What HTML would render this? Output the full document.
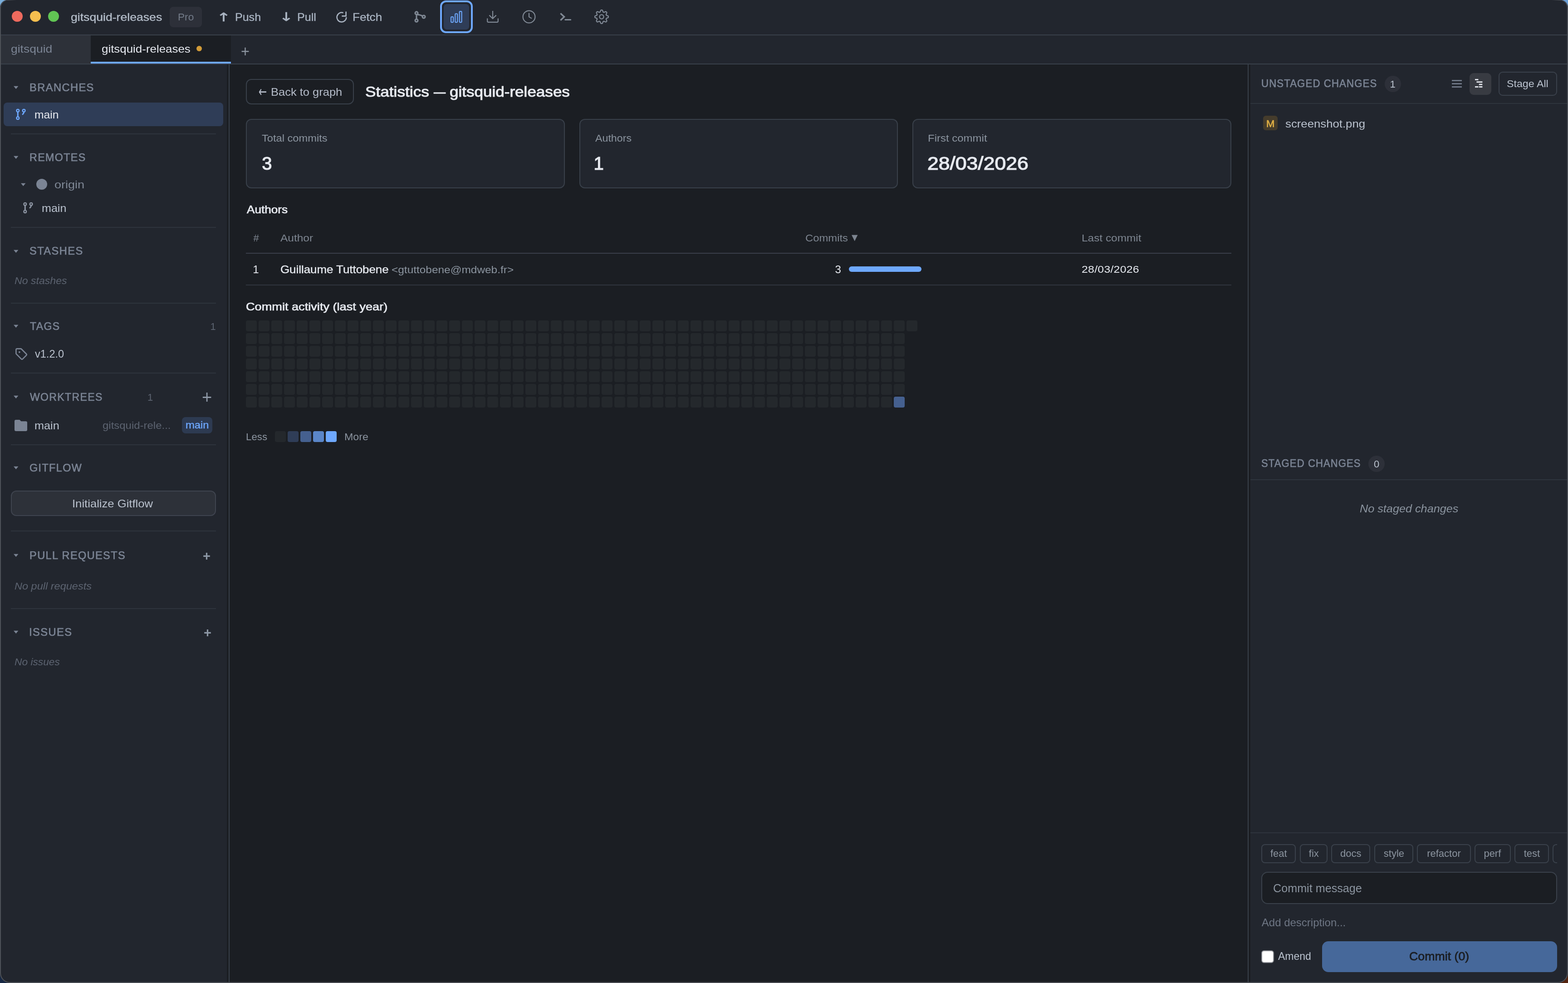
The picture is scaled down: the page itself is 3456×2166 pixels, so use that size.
<!DOCTYPE html>
<html lang="en">
<head>
<meta charset="utf-8">
<title>GitSquid — Statistics — gitsquid-releases</title>
<style>
* { box-sizing: border-box; margin: 0; padding: 0; }
html, body { width: 3456px; height: 2166px; background: #0b0d12; }
body { overflow: hidden; }
@media (min-resolution: 2dppx) and (max-width: 1800px) { html { zoom: 0.5; } }
body { position: relative; font-family: "Liberation Sans", sans-serif; -webkit-font-smoothing: antialiased; }
.corner { position: absolute; width: 40px; height: 40px; }
#win { position: absolute; left: 0; top: 0; width: 3456px; height: 2166px; border-radius: 17px 17px 22px 22px; overflow: hidden; background: #22262e; will-change: transform; }
#winborder { position: absolute; left: 0; top: 0; width: 3456px; height: 2166px; border-radius: 17px 17px 22px 22px; border: 2px solid #4e5258; border-top-width: 1px; pointer-events: none; z-index: 10; }
#wintop { position: absolute; left: 18px; top: 0; width: 3420px; height: 1px; z-index: 11; background: linear-gradient(to right, rgba(34,38,46,0), #22262e 18px, #22262e 3402px, rgba(34,38,46,0)); }
#win > * { position: absolute; }
#win > * > * { position: absolute; }
.t { white-space: nowrap; display: block; transform-origin: 0 0; font-weight: 400; font-style: normal; }
.sym { font-family: "DejaVu Sans", sans-serif; }
.ico { display: block; overflow: visible; }
.titlebar { background: #22262e; border-bottom: 2px solid #39404a; }
.tabbar { background: #22262e; border-bottom: 2px solid #39404a; }
.sidebar { background: #22262e; }
.splitter { background: #1b1e23; }
.content { background: #1b1e23; }
.changes { background: #22262e; }
.hr { background: #2e343d; }

.heat i { position: absolute; width: 24px; height: 24px; border-radius: 4px; background: #24282c; }
</style>
</head>
<body>
<div class="corner" style="left:0;top:0;background:#79addb"></div><div class="corner" style="right:0;top:0;background:#6b9fd6"></div><div class="corner" style="left:0;bottom:0;background:#172844"></div><div class="corner" style="right:0;bottom:0;background:#55240f"></div><div id="win">
<header class="titlebar" style="left:0px;top:0px;width:3456px;height:78px;">
  <div class="light" style="left:26px;top:24px;width:24px;height:24px;background:#ed6a5e;border-radius:12px;"></div>
  <div class="light" style="left:66px;top:24px;width:24px;height:24px;background:#f5bf4f;border-radius:12px;"></div>
  <div class="light" style="left:106px;top:24px;width:24px;height:24px;background:#61c554;border-radius:12px;"></div>
  <span class="t apptitle" style="left:155.8px;top:26px;font-size:24px;line-height:24px;color:#b3bcc8;-webkit-text-stroke:0.38px;transform:scaleX(1.109);">gitsquid-releases</span>
  <div class="badge-pro" style="left:374px;top:15px;width:71px;height:45px;background:#2d3039;border-radius:8px;"></div>
  <span class="t" style="left:391.97px;top:27px;font-size:22px;line-height:22px;color:#737b89;transform:scaleX(1.03);">Pro</span>
  <span class="t g sym" style="left:477.01px;top:24.5px;font-size:26.08px;line-height:26.08px;color:#a9b3c1;-webkit-text-stroke:0.6px;transform:scaleX(1.458);">↑</span>
  <span class="t tb" style="left:517.56px;top:26px;font-size:24px;line-height:24px;color:#a9b3c1;-webkit-text-stroke:0.38px;transform:scaleX(1.043);">Push</span>
  <span class="t g sym" style="left:615.01px;top:23.5px;font-size:26.08px;line-height:26.08px;color:#a9b3c1;-webkit-text-stroke:0.6px;transform:scaleX(1.458);">↓</span>
  <span class="t tb" style="left:654.86px;top:26px;font-size:24px;line-height:24px;color:#a9b3c1;-webkit-text-stroke:0.38px;transform:scaleX(1.045);">Pull</span>
  <svg class="ico" style="left:741px;top:25px;" width="24" height="24" viewBox="0 0 24 24"><path d="M15.6 3.2A10.4 10.4 0 1 0 22.4 13" fill="none" stroke="#a9b3c1" stroke-width="2.6"/><path d="M21.6 0.6V10.4H12.4" fill="none" stroke="#a9b3c1" stroke-width="2.6"/></svg>
  <span class="t tb" style="left:777.12px;top:26px;font-size:24px;line-height:24px;color:#a9b3c1;-webkit-text-stroke:0.38px;transform:scaleX(1.085);">Fetch</span>
  <svg class="ico" style="left:912px;top:23px;" width="28" height="28" viewBox="0 0 28 28"><g fill="none" stroke="#808995" stroke-width="3.1"><circle cx="6" cy="5.9" r="3"/><circle cx="6" cy="22.2" r="3"/><circle cx="22" cy="14" r="3"/><path d="M6 8.9V19.2"/><path d="M7.4 9.2C11.5 9.2 16.2 10.4 19.4 12.6"/></g></svg>
  <div class="focusring" style="left:970px;top:1px;width:72px;height:72px;border:4px solid #6ea8fe;border-radius:13px;"></div>
  <div class="iconbtn active" style="left:978px;top:9px;width:56px;height:56px;background:#2f3d57;border-radius:7px;"></div>
  <svg class="ico" style="left:993px;top:24px;" width="26" height="26" viewBox="0 0 26 26"><g fill="none" stroke="#6ea8fe" stroke-width="2.1"><rect x="1.1" y="13.1" width="5" height="12" rx="1.4"/><rect x="10.2" y="6.3" width="5" height="18.8" rx="1.4"/><rect x="19.6" y="1.1" width="5" height="24" rx="1.4"/></g></svg>
  <svg class="ico" style="left:1073px;top:23.2px;" width="26" height="27" viewBox="0 0 26 27"><g fill="none" stroke="#808995" stroke-width="2.2"><path d="M13 1V18M5.4 10.6L13 18l7.6-7.4"/><path d="M1.2 17.6v6.2a2 2 0 0 0 2 2h19.6a2 2 0 0 0 2-2v-6.2"/></g></svg>
  <svg class="ico" style="left:1151px;top:22px;" width="30" height="30" viewBox="0 0 30 30"><g fill="none" stroke="#808995" stroke-width="2.2"><circle cx="15" cy="15" r="13.4"/><path d="M15 6.4V15.2L21 18.6"/></g></svg>
  <svg class="ico" style="left:1234px;top:28px;" width="24" height="18" viewBox="0 0 24 18"><g fill="none" stroke="#808995" stroke-width="3.4"><path d="M1.4 1.4L9.6 9 1.4 16.8"/><path d="M11.8 15.6H23.6" stroke-width="3" stroke-linecap="round"/></g></svg>
  <svg class="ico" style="left:1310px;top:21px;" width="32" height="32" viewBox="0 0 32 32"><g fill="none" stroke="#808995" stroke-width="2.3" stroke-linejoin="round"><path d="M16.00 1.10L16.58 1.11L17.17 1.15L17.70 1.60L18.15 2.41L18.53 3.30L18.83 4.20L19.10 5.03L19.40 5.54L19.81 5.68L20.21 5.84L20.61 6.01L20.99 6.20L21.57 6.05L22.34 5.65L23.19 5.23L24.09 4.87L24.98 4.61L25.68 4.67L26.11 5.06L26.54 5.46L26.94 5.89L27.33 6.32L27.39 7.02L27.13 7.91L26.77 8.81L26.35 9.66L25.95 10.43L25.80 11.01L25.99 11.39L26.16 11.79L26.32 12.19L26.46 12.60L26.97 12.90L27.80 13.17L28.70 13.47L29.59 13.85L30.40 14.30L30.85 14.83L30.89 15.42L30.90 16.00L30.89 16.58L30.85 17.17L30.40 17.70L29.59 18.15L28.70 18.53L27.80 18.83L26.97 19.10L26.46 19.40L26.32 19.81L26.16 20.21L25.99 20.61L25.80 20.99L25.95 21.57L26.35 22.34L26.77 23.19L27.13 24.09L27.39 24.98L27.33 25.68L26.94 26.11L26.54 26.54L26.11 26.94L25.68 27.33L24.98 27.39L24.09 27.13L23.19 26.77L22.34 26.35L21.57 25.95L20.99 25.80L20.61 25.99L20.21 26.16L19.81 26.32L19.40 26.46L19.10 26.97L18.83 27.80L18.53 28.70L18.15 29.59L17.70 30.40L17.17 30.85L16.58 30.89L16.00 30.90L15.42 30.89L14.83 30.85L14.30 30.40L13.85 29.59L13.47 28.70L13.17 27.80L12.90 26.97L12.60 26.46L12.19 26.32L11.79 26.16L11.39 25.99L11.01 25.80L10.43 25.95L9.66 26.35L8.81 26.77L7.91 27.13L7.02 27.39L6.32 27.33L5.89 26.94L5.46 26.54L5.06 26.11L4.67 25.68L4.61 24.98L4.87 24.09L5.23 23.19L5.65 22.34L6.05 21.57L6.20 20.99L6.01 20.61L5.84 20.21L5.68 19.81L5.54 19.40L5.03 19.10L4.20 18.83L3.30 18.53L2.41 18.15L1.60 17.70L1.15 17.17L1.11 16.58L1.10 16.00L1.11 15.42L1.15 14.83L1.60 14.30L2.41 13.85L3.30 13.47L4.20 13.17L5.03 12.90L5.54 12.60L5.68 12.19L5.84 11.79L6.01 11.39L6.20 11.01L6.05 10.43L5.65 9.66L5.23 8.81L4.87 7.91L4.61 7.02L4.67 6.32L5.06 5.89L5.46 5.46L5.89 5.06L6.32 4.67L7.02 4.61L7.91 4.87L8.81 5.23L9.66 5.65L10.43 6.05L11.01 6.20L11.39 6.01L11.79 5.84L12.19 5.68L12.60 5.54L12.90 5.03L13.17 4.20L13.47 3.30L13.85 2.41L14.30 1.60L14.83 1.15L15.42 1.11L16.00 1.10Z"/><circle cx="16" cy="16" r="4.6"/></g></svg>
</header>
<nav class="tabbar" style="left:0px;top:78px;width:3456px;height:64px;">
  <div class="tab" style="left:0px;top:0px;width:200px;height:62px;background:#2d3139;"></div>
  <span class="t" style="left:23.7px;top:18px;font-size:24px;line-height:24px;color:#7b8494;transform:scaleX(1.104);">gitsquid</span>
  <div class="tab active" style="left:200px;top:0px;width:309px;height:62px;background:#1b1e23;border-bottom:4px solid #6ea8fe;"></div>
  <span class="t" style="left:223.72px;top:18px;font-size:24px;line-height:24px;color:#e6e9ef;transform:scaleX(1.079);">gitsquid-releases</span>
  <div class="dirty" style="left:433px;top:23.2px;width:12px;height:12px;background:#d29b38;border-radius:6px;"></div>
  <span class="t g add" style="left:531.25px;top:17.5px;font-size:34.2px;line-height:34.2px;color:#8b949f;transform:scaleX(0.95);">+</span>
</nav>
<aside class="sidebar" style="left:0px;top:142px;width:500px;height:2024px;">
  <span class="t g caret sym" style="left:30.1px;top:46.4px;font-size:8.21px;line-height:8.21px;color:#7b8494;transform:scaleX(1.657);">▼</span>
  <h3 class="t sec" style="left:65.12px;top:40px;font-size:23.5px;line-height:23.5px;color:#7b8494;-webkit-text-stroke:0.65px;letter-spacing:1.4px;transform:scaleX(1.007);">BRANCHES</h3>
  <div class="row selected" style="left:8px;top:84px;width:484px;height:52px;background:#2f3d57;border-radius:8px;"></div>
  <svg class="ico" style="left:35px;top:97px;" width="22" height="26" viewBox="0 0 22 26"><g fill="none" stroke="#6ea8fe" stroke-width="2.4"><circle cx="4.3" cy="4.7" r="2.8"/><circle cx="17.6" cy="4.7" r="2.8"/><circle cx="4.3" cy="21.2" r="2.8"/><path d="M4.3 7.5V18.4" stroke-width="3"/><path d="M17.8 7.4C17.6 10 16.6 12 14 13.6" stroke-width="2.6"/></g></svg>
  <span class="t" style="left:76.37px;top:99px;font-size:24px;line-height:24px;color:#e6e9ef;transform:scaleX(1.029);">main</span>
  <div class="hr" style="left:24px;top:152px;width:452px;height:2px;"></div>
  <span class="t g caret sym" style="left:30.1px;top:200.4px;font-size:8.21px;line-height:8.21px;color:#7b8494;transform:scaleX(1.657);">▼</span>
  <h3 class="t sec" style="left:65.13px;top:194px;font-size:23.5px;line-height:23.5px;color:#7b8494;-webkit-text-stroke:0.65px;letter-spacing:1.4px;transform:scaleX(0.989);">REMOTES</h3>
  <span class="t g caret sym" style="left:46.1px;top:260.2px;font-size:8.21px;line-height:8.21px;color:#7b8494;transform:scaleX(1.657);">▼</span>
  <div class="remote-dot" style="left:80px;top:252px;width:24px;height:24px;background:#7b8494;border-radius:12px;"></div>
  <span class="t" style="left:119.87px;top:253px;font-size:24px;line-height:24px;color:#7f8896;transform:scaleX(1.127);">origin</span>
  <svg class="ico" style="left:51px;top:303.3px;" width="22" height="26" viewBox="0 0 22 26"><g fill="none" stroke="#8d95a3" stroke-width="2.4"><circle cx="4.3" cy="4.7" r="2.8"/><circle cx="17.6" cy="4.7" r="2.8"/><circle cx="4.3" cy="21.2" r="2.8"/><path d="M4.3 7.5V18.4" stroke-width="3"/><path d="M17.8 7.4C17.6 10 16.6 12 14 13.6" stroke-width="2.6"/></g></svg>
  <span class="t" style="left:91.86px;top:305px;font-size:24px;line-height:24px;color:#bac2ce;transform:scaleX(1.045);">main</span>
  <div class="hr" style="left:24px;top:358px;width:452px;height:2px;"></div>
  <span class="t g caret sym" style="left:30.1px;top:406.8px;font-size:8.21px;line-height:8.21px;color:#7b8494;transform:scaleX(1.657);">▼</span>
  <h3 class="t sec" style="left:65.12px;top:400px;font-size:23.5px;line-height:23.5px;color:#7b8494;-webkit-text-stroke:0.65px;letter-spacing:1.4px;transform:scaleX(1.008);">STASHES</h3>
  <span class="t empty" style="left:32px;top:466px;font-size:22px;line-height:22px;color:#5c6370;font-style:italic;transform:scaleX(1.05);">No stashes</span>
  <div class="hr" style="left:24px;top:525px;width:452px;height:2px;"></div>
  <span class="t g caret sym" style="left:30.1px;top:572.4px;font-size:8.21px;line-height:8.21px;color:#7b8494;transform:scaleX(1.657);">▼</span>
  <h3 class="t sec" style="left:66.12px;top:566px;font-size:23.5px;line-height:23.5px;color:#7b8494;-webkit-text-stroke:0.65px;letter-spacing:1.4px;transform:scaleX(0.982);">TAGS</h3>
  <span class="t count" style="left:463.4px;top:567px;font-size:22px;line-height:22px;color:#5c6370;">1</span>
  <svg class="ico" style="left:34.2px;top:625px;" width="27" height="27" viewBox="0 0 27 27"><g fill="none" stroke="#7b8494" stroke-width="2.6" stroke-linejoin="round"><path d="M1.4 3.4a2 2 0 0 1 2-2h8.3a2 2 0 0 1 1.4.6l11 11a2 2 0 0 1 0 2.8l-8.3 8.3a2 2 0 0 1-2.8 0l-11-11a2 2 0 0 1-.6-1.4z"/></g><circle cx="8.8" cy="8.8" r="1.9" fill="#7b8494"/></svg>
  <span class="t" style="left:76.7px;top:626px;font-size:24px;line-height:24px;color:#bac2ce;transform:scaleX(0.98);">v1.2.0</span>
  <div class="hr" style="left:24px;top:679px;width:452px;height:2px;"></div>
  <span class="t g caret sym" style="left:30.1px;top:728.4px;font-size:8.21px;line-height:8.21px;color:#7b8494;transform:scaleX(1.657);">▼</span>
  <h3 class="t sec" style="left:66.12px;top:722px;font-size:23.5px;line-height:23.5px;color:#7b8494;-webkit-text-stroke:0.65px;letter-spacing:1.4px;transform:scaleX(0.979);">WORKTREES</h3>
  <span class="t count" style="left:325.1px;top:723px;font-size:22px;line-height:22px;color:#5c6370;">1</span>
  <span class="t g add" style="left:444.65px;top:713px;font-size:40px;line-height:40px;color:#8d97a5;transform:scaleX(0.952);">+</span>
  <svg class="ico" style="left:32px;top:782.6px;" width="28" height="25" viewBox="0 0 28 25"><path d="M0 3.2A3.2 3.2 0 0 1 3.2 0h6.6c1.2 0 2.2.5 3 1.4l1.6 1.9h10.4A3.2 3.2 0 0 1 28 6.5v15.3a3.2 3.2 0 0 1-3.2 3.2H3.2A3.2 3.2 0 0 1 0 21.8z" fill="#7b8494"/></svg>
  <span class="t" style="left:75.65px;top:784px;font-size:24px;line-height:24px;color:#bac2ce;transform:scaleX(1.053);">main</span>
  <span class="t path" style="left:225.7px;top:785px;font-size:22px;line-height:22px;color:#5c6370;transform:scaleX(1.089);">gitsquid-rele...</span>
  <div class="pill" style="left:401px;top:777px;width:67px;height:36px;background:#2d3a51;border-radius:8px;"></div>
  <span class="t" style="left:408.61px;top:784px;font-size:22px;line-height:22px;color:#6ea8fe;-webkit-text-stroke:0.35px;transform:scaleX(1.081);">main</span>
  <div class="hr" style="left:24px;top:837px;width:452px;height:2px;"></div>
  <span class="t g caret sym" style="left:30.1px;top:884.4px;font-size:8.21px;line-height:8.21px;color:#7b8494;transform:scaleX(1.657);">▼</span>
  <h3 class="t sec" style="left:65.13px;top:878px;font-size:23.5px;line-height:23.5px;color:#7b8494;-webkit-text-stroke:0.65px;letter-spacing:1.4px;transform:scaleX(0.994);">GITFLOW</h3>
  <div class="btn" style="left:24px;top:939px;width:452px;height:56px;background:#2d3139;border:2px solid #3f444f;border-radius:12px;"></div>
  <span class="t" style="left:159.26px;top:956px;font-size:24px;line-height:24px;color:#bac2ce;transform:scaleX(1.068);">Initialize Gitflow</span>
  <div class="hr" style="left:24px;top:1027px;width:452px;height:2px;"></div>
  <span class="t g caret sym" style="left:30.1px;top:1077.4px;font-size:8.21px;line-height:8.21px;color:#7b8494;transform:scaleX(1.657);">▼</span>
  <h3 class="t sec" style="left:65.12px;top:1071px;font-size:23.5px;line-height:23.5px;color:#7b8494;-webkit-text-stroke:0.65px;letter-spacing:1.4px;">PULL REQUESTS</h3>
  <span class="t g add" style="left:447.14px;top:1067.9px;font-size:30.2px;line-height:30.2px;color:#8d97a5;font-weight:700;transform:scaleX(0.962);">+</span>
  <span class="t empty" style="left:32.3px;top:1139px;font-size:22px;line-height:22px;color:#5c6370;font-style:italic;transform:scaleX(1.069);">No pull requests</span>
  <div class="hr" style="left:24px;top:1198px;width:452px;height:2px;"></div>
  <span class="t g caret sym" style="left:30.1px;top:1246.4px;font-size:8.21px;line-height:8.21px;color:#7b8494;transform:scaleX(1.657);">▼</span>
  <h3 class="t sec" style="left:64.11px;top:1240px;font-size:23.5px;line-height:23.5px;color:#7b8494;-webkit-text-stroke:0.65px;letter-spacing:1.4px;transform:scaleX(1.01);">ISSUES</h3>
  <span class="t g add" style="left:448.94px;top:1236.7px;font-size:30.2px;line-height:30.2px;color:#8d97a5;font-weight:700;transform:scaleX(0.962);">+</span>
  <span class="t empty" style="left:32.3px;top:1306px;font-size:22px;line-height:22px;color:#5c6370;font-style:italic;transform:scaleX(1.034);">No issues</span>
</aside>
<div class="splitter" style="left:500px;top:142px;width:6px;height:2024px;border-right:2px solid #39404a;">
</div>
<main class="content" style="left:506px;top:142px;width:2244px;height:2024px;">
  <div class="btn back" style="left:36px;top:32px;width:238px;height:56px;border:2px solid #39404a;border-radius:12px;"></div>
  <span class="t g sym" style="left:63.73px;top:43.8px;font-size:32.5px;line-height:32.5px;color:#b5bcc9;transform:scaleX(0.672);">←</span>
  <span class="t" style="left:90.54px;top:49px;font-size:24px;line-height:24px;color:#b5bcc9;transform:scaleX(1.062);">Back to graph</span>
  <h1 class="t" style="left:298.95px;top:44px;font-size:32px;line-height:32px;color:#e6e9ef;-webkit-text-stroke:0.99px;transform:scaleX(1.1);">Statistics</h1>
  <span class="t h1" style="left:449.5px;top:44px;font-size:32px;line-height:32px;color:#e6e9ef;-webkit-text-stroke:0.99px;transform:scaleX(0.815);">—</span>
  <span class="t h1" style="left:484.75px;top:44px;font-size:32px;line-height:32px;color:#e6e9ef;-webkit-text-stroke:0.99px;transform:scaleX(1.095);">gitsquid-releases</span>
  <div class="card" style="left:36px;top:120px;width:703px;height:153px;background:#22262e;border:2px solid #39404a;border-radius:12px;"></div>
  <span class="t label" style="left:71px;top:152px;font-size:22px;line-height:22px;color:#8b949f;transform:scaleX(1.075);">Total commits</span>
  <span class="t value" style="left:71.25px;top:198px;font-size:40px;line-height:40px;color:#e6e9ef;-webkit-text-stroke:1.24px;">3</span>
  <div class="card" style="left:771px;top:120px;width:702px;height:153px;background:#22262e;border:2px solid #39404a;border-radius:12px;"></div>
  <span class="t label" style="left:805.5px;top:152px;font-size:22px;line-height:22px;color:#8b949f;transform:scaleX(1.056);">Authors</span>
  <span class="t value" style="left:802.5px;top:198px;font-size:40px;line-height:40px;color:#e6e9ef;-webkit-text-stroke:1.24px;">1</span>
  <div class="card" style="left:1505px;top:120px;width:703px;height:153px;background:#22262e;border:2px solid #39404a;border-radius:12px;"></div>
  <span class="t label" style="left:1538.91px;top:152px;font-size:22px;line-height:22px;color:#8b949f;transform:scaleX(1.09);">First commit</span>
  <span class="t value" style="left:1538.47px;top:198px;font-size:40px;line-height:40px;color:#e6e9ef;-webkit-text-stroke:1.24px;transform:scaleX(1.112);">28/03/2026</span>
  <h2 class="t" style="left:37.71px;top:308px;font-size:24px;line-height:24px;color:#e6e9ef;-webkit-text-stroke:0.74px;transform:scaleX(1.09);">Authors</h2>
  <span class="t th" style="left:52.5px;top:372px;font-size:22px;line-height:22px;color:#7d8590;">#</span>
  <span class="t th" style="left:112.3px;top:372px;font-size:22px;line-height:22px;color:#7d8590;transform:scaleX(1.112);">Author</span>
  <span class="t th" style="left:1268.52px;top:372px;font-size:22px;line-height:22px;color:#7d8590;transform:scaleX(1.083);">Commits</span>
  <span class="t g sort sym" style="left:1371.3px;top:373.1px;font-size:17.56px;line-height:17.56px;color:#7d8590;transform:scaleX(0.993);">▼</span>
  <span class="t th" style="left:1877.59px;top:372px;font-size:22px;line-height:22px;color:#7d8590;transform:scaleX(1.109);">Last commit</span>
  <div class="rule" style="left:36px;top:415px;width:2172px;height:2px;background:#3a3f4a;"></div>
  <span class="t td" style="left:51.3px;top:440px;font-size:24px;line-height:24px;color:#e6e9ef;">1</span>
  <span class="t td name" style="left:111.73px;top:440px;font-size:24px;line-height:24px;color:#e6e9ef;-webkit-text-stroke:0.38px;transform:scaleX(1.077);">Guillaume Tuttobene</span>
  <span class="t td email" style="left:357.39px;top:442px;font-size:22px;line-height:22px;color:#8b949f;transform:scaleX(1.11);">&lt;gtuttobene@mdweb.fr&gt;</span>
  <span class="t td" style="left:1334.4px;top:440px;font-size:24px;line-height:24px;color:#e6e9ef;">3</span>
  <div class="bar" style="left:1365px;top:445px;width:160px;height:12px;background:#6ea8fe;border-radius:6px;"></div>
  <span class="t td" style="left:1877.57px;top:441px;font-size:22px;line-height:22px;color:#e6e9ef;letter-spacing:0.22px;transform:scaleX(1.13);">28/03/2026</span>
  <div class="rule" style="left:36px;top:485px;width:2172px;height:2px;background:#30343d;"></div>
  <h2 class="t" style="left:36.09px;top:522px;font-size:24px;line-height:24px;color:#e6e9ef;-webkit-text-stroke:0.74px;letter-spacing:0.01px;transform:scaleX(1.13);">Commit activity (last year)</h2>
  <div class="heat" style="left:36px;top:564px;width:1484px;height:196px;"><i style="left:0px;top:0px;"></i><i style="left:0px;top:28px;"></i><i style="left:0px;top:56px;"></i><i style="left:0px;top:84px;"></i><i style="left:0px;top:112px;"></i><i style="left:0px;top:140px;"></i><i style="left:0px;top:168px;"></i><i style="left:28px;top:0px;"></i><i style="left:28px;top:28px;"></i><i style="left:28px;top:56px;"></i><i style="left:28px;top:84px;"></i><i style="left:28px;top:112px;"></i><i style="left:28px;top:140px;"></i><i style="left:28px;top:168px;"></i><i style="left:56px;top:0px;"></i><i style="left:56px;top:28px;"></i><i style="left:56px;top:56px;"></i><i style="left:56px;top:84px;"></i><i style="left:56px;top:112px;"></i><i style="left:56px;top:140px;"></i><i style="left:56px;top:168px;"></i><i style="left:84px;top:0px;"></i><i style="left:84px;top:28px;"></i><i style="left:84px;top:56px;"></i><i style="left:84px;top:84px;"></i><i style="left:84px;top:112px;"></i><i style="left:84px;top:140px;"></i><i style="left:84px;top:168px;"></i><i style="left:112px;top:0px;"></i><i style="left:112px;top:28px;"></i><i style="left:112px;top:56px;"></i><i style="left:112px;top:84px;"></i><i style="left:112px;top:112px;"></i><i style="left:112px;top:140px;"></i><i style="left:112px;top:168px;"></i><i style="left:140px;top:0px;"></i><i style="left:140px;top:28px;"></i><i style="left:140px;top:56px;"></i><i style="left:140px;top:84px;"></i><i style="left:140px;top:112px;"></i><i style="left:140px;top:140px;"></i><i style="left:140px;top:168px;"></i><i style="left:168px;top:0px;"></i><i style="left:168px;top:28px;"></i><i style="left:168px;top:56px;"></i><i style="left:168px;top:84px;"></i><i style="left:168px;top:112px;"></i><i style="left:168px;top:140px;"></i><i style="left:168px;top:168px;"></i><i style="left:196px;top:0px;"></i><i style="left:196px;top:28px;"></i><i style="left:196px;top:56px;"></i><i style="left:196px;top:84px;"></i><i style="left:196px;top:112px;"></i><i style="left:196px;top:140px;"></i><i style="left:196px;top:168px;"></i><i style="left:224px;top:0px;"></i><i style="left:224px;top:28px;"></i><i style="left:224px;top:56px;"></i><i style="left:224px;top:84px;"></i><i style="left:224px;top:112px;"></i><i style="left:224px;top:140px;"></i><i style="left:224px;top:168px;"></i><i style="left:252px;top:0px;"></i><i style="left:252px;top:28px;"></i><i style="left:252px;top:56px;"></i><i style="left:252px;top:84px;"></i><i style="left:252px;top:112px;"></i><i style="left:252px;top:140px;"></i><i style="left:252px;top:168px;"></i><i style="left:280px;top:0px;"></i><i style="left:280px;top:28px;"></i><i style="left:280px;top:56px;"></i><i style="left:280px;top:84px;"></i><i style="left:280px;top:112px;"></i><i style="left:280px;top:140px;"></i><i style="left:280px;top:168px;"></i><i style="left:308px;top:0px;"></i><i style="left:308px;top:28px;"></i><i style="left:308px;top:56px;"></i><i style="left:308px;top:84px;"></i><i style="left:308px;top:112px;"></i><i style="left:308px;top:140px;"></i><i style="left:308px;top:168px;"></i><i style="left:336px;top:0px;"></i><i style="left:336px;top:28px;"></i><i style="left:336px;top:56px;"></i><i style="left:336px;top:84px;"></i><i style="left:336px;top:112px;"></i><i style="left:336px;top:140px;"></i><i style="left:336px;top:168px;"></i><i style="left:364px;top:0px;"></i><i style="left:364px;top:28px;"></i><i style="left:364px;top:56px;"></i><i style="left:364px;top:84px;"></i><i style="left:364px;top:112px;"></i><i style="left:364px;top:140px;"></i><i style="left:364px;top:168px;"></i><i style="left:392px;top:0px;"></i><i style="left:392px;top:28px;"></i><i style="left:392px;top:56px;"></i><i style="left:392px;top:84px;"></i><i style="left:392px;top:112px;"></i><i style="left:392px;top:140px;"></i><i style="left:392px;top:168px;"></i><i style="left:420px;top:0px;"></i><i style="left:420px;top:28px;"></i><i style="left:420px;top:56px;"></i><i style="left:420px;top:84px;"></i><i style="left:420px;top:112px;"></i><i style="left:420px;top:140px;"></i><i style="left:420px;top:168px;"></i><i style="left:448px;top:0px;"></i><i style="left:448px;top:28px;"></i><i style="left:448px;top:56px;"></i><i style="left:448px;top:84px;"></i><i style="left:448px;top:112px;"></i><i style="left:448px;top:140px;"></i><i style="left:448px;top:168px;"></i><i style="left:476px;top:0px;"></i><i style="left:476px;top:28px;"></i><i style="left:476px;top:56px;"></i><i style="left:476px;top:84px;"></i><i style="left:476px;top:112px;"></i><i style="left:476px;top:140px;"></i><i style="left:476px;top:168px;"></i><i style="left:504px;top:0px;"></i><i style="left:504px;top:28px;"></i><i style="left:504px;top:56px;"></i><i style="left:504px;top:84px;"></i><i style="left:504px;top:112px;"></i><i style="left:504px;top:140px;"></i><i style="left:504px;top:168px;"></i><i style="left:532px;top:0px;"></i><i style="left:532px;top:28px;"></i><i style="left:532px;top:56px;"></i><i style="left:532px;top:84px;"></i><i style="left:532px;top:112px;"></i><i style="left:532px;top:140px;"></i><i style="left:532px;top:168px;"></i><i style="left:560px;top:0px;"></i><i style="left:560px;top:28px;"></i><i style="left:560px;top:56px;"></i><i style="left:560px;top:84px;"></i><i style="left:560px;top:112px;"></i><i style="left:560px;top:140px;"></i><i style="left:560px;top:168px;"></i><i style="left:588px;top:0px;"></i><i style="left:588px;top:28px;"></i><i style="left:588px;top:56px;"></i><i style="left:588px;top:84px;"></i><i style="left:588px;top:112px;"></i><i style="left:588px;top:140px;"></i><i style="left:588px;top:168px;"></i><i style="left:616px;top:0px;"></i><i style="left:616px;top:28px;"></i><i style="left:616px;top:56px;"></i><i style="left:616px;top:84px;"></i><i style="left:616px;top:112px;"></i><i style="left:616px;top:140px;"></i><i style="left:616px;top:168px;"></i><i style="left:644px;top:0px;"></i><i style="left:644px;top:28px;"></i><i style="left:644px;top:56px;"></i><i style="left:644px;top:84px;"></i><i style="left:644px;top:112px;"></i><i style="left:644px;top:140px;"></i><i style="left:644px;top:168px;"></i><i style="left:672px;top:0px;"></i><i style="left:672px;top:28px;"></i><i style="left:672px;top:56px;"></i><i style="left:672px;top:84px;"></i><i style="left:672px;top:112px;"></i><i style="left:672px;top:140px;"></i><i style="left:672px;top:168px;"></i><i style="left:700px;top:0px;"></i><i style="left:700px;top:28px;"></i><i style="left:700px;top:56px;"></i><i style="left:700px;top:84px;"></i><i style="left:700px;top:112px;"></i><i style="left:700px;top:140px;"></i><i style="left:700px;top:168px;"></i><i style="left:728px;top:0px;"></i><i style="left:728px;top:28px;"></i><i style="left:728px;top:56px;"></i><i style="left:728px;top:84px;"></i><i style="left:728px;top:112px;"></i><i style="left:728px;top:140px;"></i><i style="left:728px;top:168px;"></i><i style="left:756px;top:0px;"></i><i style="left:756px;top:28px;"></i><i style="left:756px;top:56px;"></i><i style="left:756px;top:84px;"></i><i style="left:756px;top:112px;"></i><i style="left:756px;top:140px;"></i><i style="left:756px;top:168px;"></i><i style="left:784px;top:0px;"></i><i style="left:784px;top:28px;"></i><i style="left:784px;top:56px;"></i><i style="left:784px;top:84px;"></i><i style="left:784px;top:112px;"></i><i style="left:784px;top:140px;"></i><i style="left:784px;top:168px;"></i><i style="left:812px;top:0px;"></i><i style="left:812px;top:28px;"></i><i style="left:812px;top:56px;"></i><i style="left:812px;top:84px;"></i><i style="left:812px;top:112px;"></i><i style="left:812px;top:140px;"></i><i style="left:812px;top:168px;"></i><i style="left:840px;top:0px;"></i><i style="left:840px;top:28px;"></i><i style="left:840px;top:56px;"></i><i style="left:840px;top:84px;"></i><i style="left:840px;top:112px;"></i><i style="left:840px;top:140px;"></i><i style="left:840px;top:168px;"></i><i style="left:868px;top:0px;"></i><i style="left:868px;top:28px;"></i><i style="left:868px;top:56px;"></i><i style="left:868px;top:84px;"></i><i style="left:868px;top:112px;"></i><i style="left:868px;top:140px;"></i><i style="left:868px;top:168px;"></i><i style="left:896px;top:0px;"></i><i style="left:896px;top:28px;"></i><i style="left:896px;top:56px;"></i><i style="left:896px;top:84px;"></i><i style="left:896px;top:112px;"></i><i style="left:896px;top:140px;"></i><i style="left:896px;top:168px;"></i><i style="left:924px;top:0px;"></i><i style="left:924px;top:28px;"></i><i style="left:924px;top:56px;"></i><i style="left:924px;top:84px;"></i><i style="left:924px;top:112px;"></i><i style="left:924px;top:140px;"></i><i style="left:924px;top:168px;"></i><i style="left:952px;top:0px;"></i><i style="left:952px;top:28px;"></i><i style="left:952px;top:56px;"></i><i style="left:952px;top:84px;"></i><i style="left:952px;top:112px;"></i><i style="left:952px;top:140px;"></i><i style="left:952px;top:168px;"></i><i style="left:980px;top:0px;"></i><i style="left:980px;top:28px;"></i><i style="left:980px;top:56px;"></i><i style="left:980px;top:84px;"></i><i style="left:980px;top:112px;"></i><i style="left:980px;top:140px;"></i><i style="left:980px;top:168px;"></i><i style="left:1008px;top:0px;"></i><i style="left:1008px;top:28px;"></i><i style="left:1008px;top:56px;"></i><i style="left:1008px;top:84px;"></i><i style="left:1008px;top:112px;"></i><i style="left:1008px;top:140px;"></i><i style="left:1008px;top:168px;"></i><i style="left:1036px;top:0px;"></i><i style="left:1036px;top:28px;"></i><i style="left:1036px;top:56px;"></i><i style="left:1036px;top:84px;"></i><i style="left:1036px;top:112px;"></i><i style="left:1036px;top:140px;"></i><i style="left:1036px;top:168px;"></i><i style="left:1064px;top:0px;"></i><i style="left:1064px;top:28px;"></i><i style="left:1064px;top:56px;"></i><i style="left:1064px;top:84px;"></i><i style="left:1064px;top:112px;"></i><i style="left:1064px;top:140px;"></i><i style="left:1064px;top:168px;"></i><i style="left:1092px;top:0px;"></i><i style="left:1092px;top:28px;"></i><i style="left:1092px;top:56px;"></i><i style="left:1092px;top:84px;"></i><i style="left:1092px;top:112px;"></i><i style="left:1092px;top:140px;"></i><i style="left:1092px;top:168px;"></i><i style="left:1120px;top:0px;"></i><i style="left:1120px;top:28px;"></i><i style="left:1120px;top:56px;"></i><i style="left:1120px;top:84px;"></i><i style="left:1120px;top:112px;"></i><i style="left:1120px;top:140px;"></i><i style="left:1120px;top:168px;"></i><i style="left:1148px;top:0px;"></i><i style="left:1148px;top:28px;"></i><i style="left:1148px;top:56px;"></i><i style="left:1148px;top:84px;"></i><i style="left:1148px;top:112px;"></i><i style="left:1148px;top:140px;"></i><i style="left:1148px;top:168px;"></i><i style="left:1176px;top:0px;"></i><i style="left:1176px;top:28px;"></i><i style="left:1176px;top:56px;"></i><i style="left:1176px;top:84px;"></i><i style="left:1176px;top:112px;"></i><i style="left:1176px;top:140px;"></i><i style="left:1176px;top:168px;"></i><i style="left:1204px;top:0px;"></i><i style="left:1204px;top:28px;"></i><i style="left:1204px;top:56px;"></i><i style="left:1204px;top:84px;"></i><i style="left:1204px;top:112px;"></i><i style="left:1204px;top:140px;"></i><i style="left:1204px;top:168px;"></i><i style="left:1232px;top:0px;"></i><i style="left:1232px;top:28px;"></i><i style="left:1232px;top:56px;"></i><i style="left:1232px;top:84px;"></i><i style="left:1232px;top:112px;"></i><i style="left:1232px;top:140px;"></i><i style="left:1232px;top:168px;"></i><i style="left:1260px;top:0px;"></i><i style="left:1260px;top:28px;"></i><i style="left:1260px;top:56px;"></i><i style="left:1260px;top:84px;"></i><i style="left:1260px;top:112px;"></i><i style="left:1260px;top:140px;"></i><i style="left:1260px;top:168px;"></i><i style="left:1288px;top:0px;"></i><i style="left:1288px;top:28px;"></i><i style="left:1288px;top:56px;"></i><i style="left:1288px;top:84px;"></i><i style="left:1288px;top:112px;"></i><i style="left:1288px;top:140px;"></i><i style="left:1288px;top:168px;"></i><i style="left:1316px;top:0px;"></i><i style="left:1316px;top:28px;"></i><i style="left:1316px;top:56px;"></i><i style="left:1316px;top:84px;"></i><i style="left:1316px;top:112px;"></i><i style="left:1316px;top:140px;"></i><i style="left:1316px;top:168px;"></i><i style="left:1344px;top:0px;"></i><i style="left:1344px;top:28px;"></i><i style="left:1344px;top:56px;"></i><i style="left:1344px;top:84px;"></i><i style="left:1344px;top:112px;"></i><i style="left:1344px;top:140px;"></i><i style="left:1344px;top:168px;"></i><i style="left:1372px;top:0px;"></i><i style="left:1372px;top:28px;"></i><i style="left:1372px;top:56px;"></i><i style="left:1372px;top:84px;"></i><i style="left:1372px;top:112px;"></i><i style="left:1372px;top:140px;"></i><i style="left:1372px;top:168px;"></i><i style="left:1400px;top:0px;"></i><i style="left:1400px;top:28px;"></i><i style="left:1400px;top:56px;"></i><i style="left:1400px;top:84px;"></i><i style="left:1400px;top:112px;"></i><i style="left:1400px;top:140px;"></i><i style="left:1400px;top:168px;"></i><i style="left:1428px;top:0px;"></i><i style="left:1428px;top:28px;"></i><i style="left:1428px;top:56px;"></i><i style="left:1428px;top:84px;"></i><i style="left:1428px;top:112px;"></i><i style="left:1428px;top:140px;"></i><i style="left:1428px;top:168px;background:#45608f;"></i><i style="left:1456px;top:0px;"></i></div>
  <span class="t" style="left:36.39px;top:810px;font-size:22px;line-height:22px;color:#8b949f;transform:scaleX(1.012);">Less</span>
  <div class="lg" style="left:100px;top:808px;width:24px;height:24px;background:#24282c;border-radius:4px;"></div>
  <div class="lg" style="left:128px;top:808px;width:24px;height:24px;background:#2f3d57;border-radius:4px;"></div>
  <div class="lg" style="left:156px;top:808px;width:24px;height:24px;background:#45608f;border-radius:4px;"></div>
  <div class="lg" style="left:184px;top:808px;width:24px;height:24px;background:#5a86c8;border-radius:4px;"></div>
  <div class="lg" style="left:212px;top:808px;width:24px;height:24px;background:#6ea8fe;border-radius:4px;"></div>
  <span class="t" style="left:252.55px;top:810px;font-size:22px;line-height:22px;color:#8b949f;transform:scaleX(1.055);">More</span>
</main>
<div class="splitter" style="left:2750px;top:142px;width:6px;height:2024px;border-left:2px solid #39404a;">
</div>
<aside class="changes" style="left:2756px;top:142px;width:700px;height:2024px;">
  <h3 class="t" style="left:24.15px;top:31px;font-size:23px;line-height:23px;color:#7b8494;-webkit-text-stroke:0.65px;letter-spacing:1.2px;transform:scaleX(0.962);">UNSTAGED CHANGES</h3>
  <div class="count" style="left:296px;top:25px;width:36px;height:36px;background:#2d3039;border-radius:18px;"></div>
  <span class="t" style="left:307.5px;top:33px;font-size:22px;line-height:22px;color:#bac2ce;">1</span>
  <svg class="ico" style="left:444px;top:34px;" width="22" height="17" viewBox="0 0 22 17"><path d="M0 1.5H22M0 8.5H22M0 15.5H22" fill="none" stroke="#7b8494" stroke-width="2.5"/></svg>
  <div class="iconbtn on" style="left:483px;top:19px;width:48px;height:48px;background:#383b42;border-radius:9px;"></div>
  <svg class="ico" style="left:494.7px;top:32.3px;" width="17" height="19" viewBox="0 0 17 19"><g fill="#e6e9ef"><rect x="0" y="0" width="7.4" height="2.8"/><rect x="3.4" y="5.3" width="13" height="2.8"/><rect x="8.8" y="10.7" width="7.4" height="2.8"/><rect x="0" y="16" width="7.4" height="2.8"/><rect x="8.8" y="16" width="7.6" height="2.8"/></g></svg>
  <div class="btn" style="left:547px;top:16px;width:129px;height:53px;border:2px solid #3a414b;border-radius:9px;"></div>
  <span class="t" style="left:564.74px;top:32px;font-size:22px;line-height:22px;color:#bac2ce;transform:scaleX(1.056);">Stage All</span>
  <div class="hr" style="left:0px;top:85px;width:700px;height:2px;"></div>
  <div class="status" style="left:28px;top:113px;width:32px;height:32px;background:#453c2c;border-radius:6px;"></div>
  <span class="t" style="left:35px;top:120px;font-size:22px;line-height:22px;color:#e0b045;-webkit-text-stroke:0.68px;">M</span>
  <span class="t" style="left:77px;top:119px;font-size:24px;line-height:24px;color:#bac2ce;transform:scaleX(1.073);">screenshot.png</span>
  <h3 class="t" style="left:24.15px;top:868px;font-size:23px;line-height:23px;color:#7b8494;-webkit-text-stroke:0.65px;letter-spacing:1.2px;transform:scaleX(0.956);">STAGED CHANGES</h3>
  <div class="count" style="left:260px;top:862px;width:36px;height:36px;background:#2d3039;border-radius:18px;"></div>
  <span class="t" style="left:272px;top:870px;font-size:22px;line-height:22px;color:#bac2ce;">0</span>
  <div class="hr" style="left:0px;top:914px;width:700px;height:2px;"></div>
  <span class="t empty" style="left:241.1px;top:967px;font-size:24px;line-height:24px;color:#8b949f;font-style:italic;transform:scaleX(1.051);">No staged changes</span>
  <div class="hr" style="left:0px;top:1692px;width:700px;height:2px;"></div>
  <div class="chip" style="left:24px;top:1718px;width:76px;height:42px;border:2px solid #3a414b;border-radius:8px;"></div>
  <span class="t" style="left:44.01px;top:1728px;font-size:22px;line-height:22px;color:#8b949f;">feat</span>
  <div class="chip" style="left:109px;top:1718px;width:61px;height:42px;border:2px solid #3a414b;border-radius:8px;"></div>
  <span class="t" style="left:128.8px;top:1728px;font-size:22px;line-height:22px;color:#8b949f;">fix</span>
  <div class="chip" style="left:178px;top:1718px;width:86px;height:42px;border:2px solid #3a414b;border-radius:8px;"></div>
  <span class="t" style="left:198.06px;top:1728px;font-size:22px;line-height:22px;color:#8b949f;">docs</span>
  <div class="chip" style="left:273px;top:1718px;width:86px;height:42px;border:2px solid #3a414b;border-radius:8px;"></div>
  <span class="t" style="left:293.8px;top:1728px;font-size:22px;line-height:22px;color:#8b949f;">style</span>
  <div class="chip" style="left:367px;top:1718px;width:119px;height:42px;border:2px solid #3a414b;border-radius:8px;"></div>
  <span class="t" style="left:389.17px;top:1728px;font-size:22px;line-height:22px;color:#8b949f;">refactor</span>
  <div class="chip" style="left:494px;top:1718px;width:80px;height:42px;border:2px solid #3a414b;border-radius:8px;"></div>
  <span class="t" style="left:514.4px;top:1728px;font-size:22px;line-height:22px;color:#8b949f;">perf</span>
  <div class="chip" style="left:582px;top:1718px;width:76px;height:42px;border:2px solid #3a414b;border-radius:8px;"></div>
  <span class="t" style="left:602.63px;top:1728px;font-size:22px;line-height:22px;color:#8b949f;">test</span>
  <div class="chip cut" style="left:666px;top:1718px;width:10px;height:42px;border:2px solid #3a414b;border-right:0;border-radius:8px 0 0 8px;"></div>
  <div class="input" style="left:24px;top:1779px;width:652px;height:71px;background:#1b1e23;border:2px solid #3a414b;border-radius:14px;"></div>
  <span class="t ph" style="left:49.73px;top:1802px;font-size:26px;line-height:26px;color:#8b949f;transform:scaleX(0.968);">Commit message</span>
  <span class="t ph" style="left:24.8px;top:1879px;font-size:24px;line-height:24px;color:#6e7684;">Add description...</span>
  <div class="check" style="left:24px;top:1952px;width:28px;height:28px;background:#ffffff;border:2px solid #8a8d93;border-radius:6px;"></div>
  <span class="t" style="left:61.2px;top:1953px;font-size:24px;line-height:24px;color:#bac2ce;transform:scaleX(0.959);">Amend</span>
  <div class="btn primary" style="left:158px;top:1932px;width:518px;height:68px;background:#46689a;border-radius:14px;"></div>
  <span class="t" style="left:349.99px;top:1952px;font-size:26px;line-height:26px;color:#1b1e23;-webkit-text-stroke:0.81px;transform:scaleX(1.029);">Commit (0)</span>
</aside>
</div>
<div id="winborder"></div>
<div id="wintop"></div>
</body>
</html>
